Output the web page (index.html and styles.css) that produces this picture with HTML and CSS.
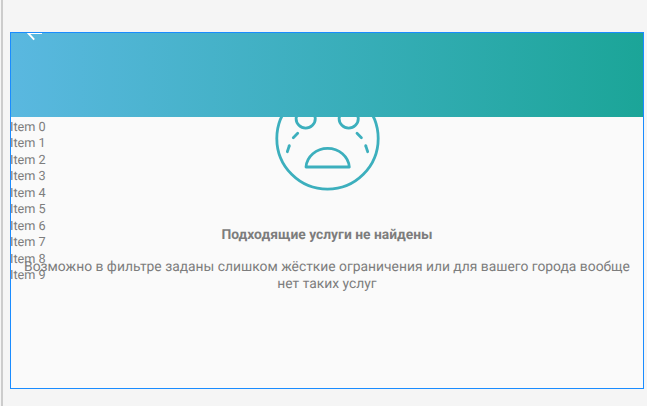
FILE: index.html
```html
<!DOCTYPE html>
<html lang="ru">
<head>
<meta charset="utf-8">
<title>Услуги</title>
<link rel="stylesheet" href="styles.css">
</head>
<body>
<div class="rail"></div>
<main class="frame">
  <header class="appbar">
    <svg class="back" width="16" height="10" viewBox="0 0 16 10"><path d="M15 0H1L7.2 6.6" fill="none" stroke="#fff" stroke-width="1.9"/></svg>
  </header>
  <div class="body">
    <ul class="items">
      <li>Item 0</li><li>Item 1</li><li>Item 2</li><li>Item 3</li><li>Item 4</li>
      <li>Item 5</li><li>Item 6</li><li>Item 7</li><li>Item 8</li><li>Item 9</li>
    </ul>
    <section class="empty">
      <svg class="face" width="107" height="107" viewBox="0 0 107 107">
        <g fill="none" stroke="#3cafbd" stroke-width="2.8" stroke-linecap="round" stroke-linejoin="round">
          <circle cx="53.5" cy="53.5" r="50.7"/>
          <circle cx="31.7" cy="33.5" r="9.6"/>
          <circle cx="74.7" cy="33.5" r="9.6"/>
          <path d="M23.7 48.3 L19.3 52.7"/>
          <path d="M15.3 60.7 L13.3 66.7"/>
          <path d="M83 48.3 L87.4 52.7"/>
          <path d="M91.7 60.7 L93.7 66.7"/>
          <path d="M32 82 A21.7 20 0 0 1 75.3 82 Z"/>
        </g>
      </svg>
      <h2 class="title">Подходящие услуги не найдены</h2>
      <p class="text">Возможно в фильтре заданы слишком жёсткие ограничения или для вашего города вообще нет таких услуг</p>
    </section>
  </div>
</main>
</body>
</html>
```
FILE: styles.css
```css
html, body {
  margin: 0;
  background: #f5f5f5;
  overflow: hidden;
}
body {
  display: flex;
  height: 406px;
  padding: 32px 3px 17px 1px;
  box-sizing: border-box;
  font-family: Roboto, "Noto Sans", sans-serif;
  text-rendering: geometricPrecision;
}
.rail {
  flex: none;
  width: 2px;
  margin: -32px 7px -17px 0;
  background: #cccccc;
}
.frame {
  flex: 1;
  min-width: 0;
  box-sizing: border-box;
  border: 1px solid #1a8cff;
  background: #fafafa;
  display: flex;
  flex-direction: column;
  overflow: hidden;
}
.appbar {
  height: 84px;
  flex: none;
  position: relative;
  z-index: 2;
  background: linear-gradient(90deg, #5ab8e0, #1ba598);
}
.back { position: absolute; left: 16px; top: 0; }
.body { flex: 1; position: relative; }
.items {
  list-style: none;
  margin: 0;
  padding: 0;
  font-size: 12.7px;
  line-height: 16.45px;
  color: #7d7d7d;
  position: absolute;
  left: -1px;
  top: 3px;
}
.empty {
  display: flex;
  flex-direction: column;
  align-items: center;
  text-align: center;
  margin-top: -32px;
  color: #7d7d7d;
}
.face { display: block; }
.title {
  margin: 35px 0 0;
  font-size: 13.85px;
  font-weight: 700;
  line-height: 16px;
}
.text {
  margin: 16px 0 0;
  font-size: 13.85px;
  line-height: 17px;
  padding: 0 8px;
}
```
